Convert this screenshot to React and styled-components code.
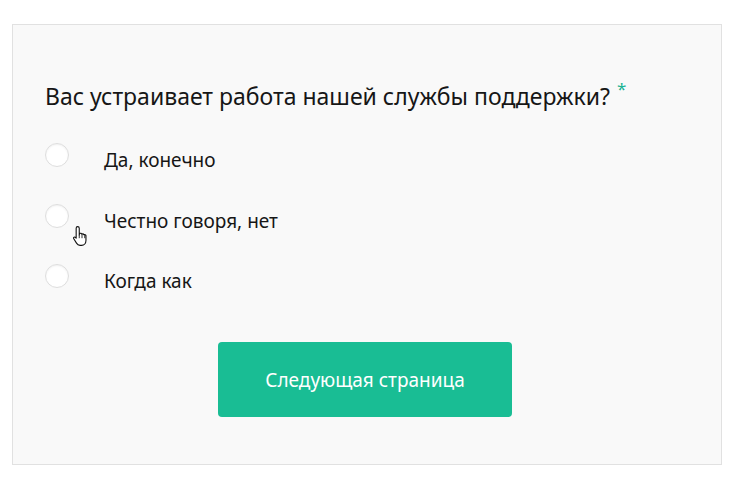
import React from "react";
import styled, { createGlobalStyle } from "styled-components";

const GlobalStyle = createGlobalStyle`
  body {
    margin: 0;
    background: #ffffff;
    font-family: "Noto Sans", "Open Sans", sans-serif;
    color: #161616;
  }
`;

const Page = styled.div`
  padding: 24px 13px 26px 12px;
`;

const Panel = styled.div`
  position: relative;
  background: #f9f9f9;
  border: 1px solid #e1e1e1;
  height: 441px;
  box-sizing: border-box;
  padding: 56px 36px 0 32px;
`;

const Question = styled.h2`
  margin: 0;
  font-size: 23px;
  font-weight: 400;
  line-height: 30px;
`;

const Required = styled.span`
  color: #19b394;
  font-size: 17px;
  vertical-align: top;
  margin-left: 7px;
  position: relative;
  top: -7px;
`;

const Options = styled.div`
  display: flex;
  flex-direction: column;
  margin-top: 31px;
  gap: 24.5px;
`;

const Option = styled.label`
  display: flex;
  align-items: flex-start;
  gap: 35px;
  height: 36px;
`;

const Radio = styled.span`
  width: 24px;
  height: 24px;
  margin-top: 1px;
  border-radius: 50%;
  background: #fff;
  border: 1px solid #dedede;
  box-sizing: border-box;
  box-shadow: inset 0 1px 2px rgba(0, 0, 0, 0.06);
  flex-shrink: 0;
`;

const Label = styled.span`
  font-size: 19px;
  line-height: 24px;
  margin-top: 6px;
`;

const Footer = styled.div`
  display: flex;
  justify-content: center;
  margin-top: 43px;
`;

const NextButton = styled.button`
  width: 294px;
  height: 75px;
  border: none;
  border-radius: 4px;
  background: #19bd94;
  color: #fff;
  font-family: inherit;
  font-size: 19px;
  cursor: pointer;
`;

const Cursor = styled.svg`
  position: absolute;
  left: 59px;
  top: 200px;
`;

const HandCursor = () => (
  <Cursor width="20" height="22" viewBox="0 0 18 20">
    <path
      d="M5 1.5c.8 0 1.5.6 1.5 1.4V9l.3-1.2c.9-.5 1.8-.2 2 .6.6-.6 1.7-.4 1.9.5.8-.5 1.8 0 1.9.8v4.5c0 2.4-1.6 4.3-4 4.3H7.2c-1.4 0-2.5-.8-3.2-2L1.4 12.3c-.4-.8.4-1.7 1.3-1.2l1 .8V2.9c0-.8.6-1.4 1.3-1.4z"
      fill="#fff"
      stroke="#111"
      strokeWidth="1"
      strokeLinejoin="round"
    />
    <path d="M6.5 9v3M9 8.6v3.4M11.5 9v3" stroke="#111" strokeWidth="0.8" />
  </Cursor>
);

const options = ["Да, конечно", "Честно говоря, нет", "Когда как"];

export default function App() {
  return (
    <Page>
      <GlobalStyle />
      <Panel>
        <Question>
          Вас устраивает работа нашей службы поддержки?
          <Required>*</Required>
        </Question>
        <Options>
          {options.map((text) => (
            <Option key={text}>
              <Radio />
              <Label>{text}</Label>
            </Option>
          ))}
        </Options>
        <Footer>
          <NextButton>Следующая страница</NextButton>
        </Footer>
        <HandCursor />
      </Panel>
    </Page>
  );
}
